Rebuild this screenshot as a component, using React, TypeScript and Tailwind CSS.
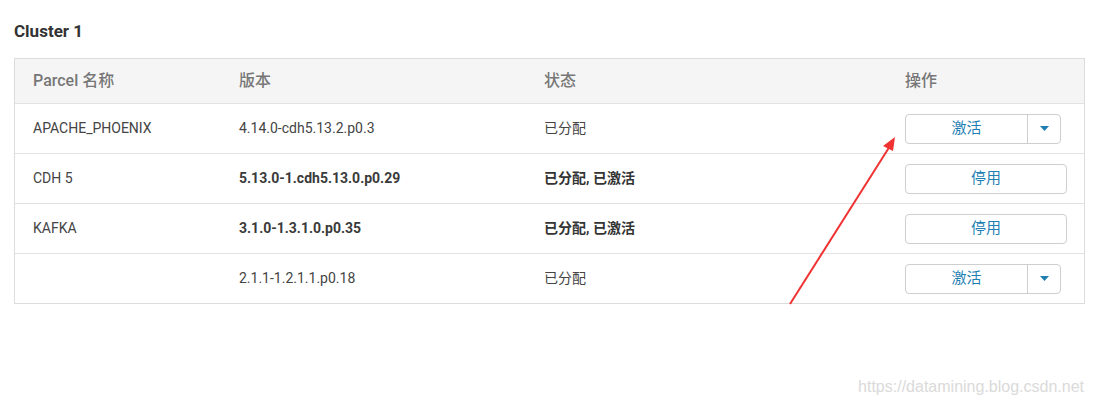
import React from 'react';

interface Row {
  name: string;
  version: string;
  status: string;
  active: boolean;
  action: string;
  split: boolean;
}

const rows: Row[] = [
  { name: 'APACHE_PHOENIX', version: '4.14.0-cdh5.13.2.p0.3', status: '已分配', active: false, action: '激活', split: true },
  { name: 'CDH 5', version: '5.13.0-1.cdh5.13.0.p0.29', status: '已分配, 已激活', active: true, action: '停用', split: false },
  { name: 'KAFKA', version: '3.1.0-1.3.1.0.p0.35', status: '已分配, 已激活', active: true, action: '停用', split: false },
  { name: '', version: '2.1.1-1.2.1.1.p0.18', status: '已分配', active: false, action: '激活', split: true },
];

const font = { fontFamily: 'Roboto, "Noto Sans CJK SC", sans-serif' };

const ActionButton: React.FC<{ row: Row }> = ({ row }) => {
  if (!row.split) {
    return (
      <button className="w-[162px] h-[30px] rounded-[4px] border border-[#cfcfcf] bg-white text-[15px] text-[#1f7fb3]">
        {row.action}
      </button>
    );
  }
  return (
    <div className="flex w-[156px] h-[30px] rounded-[4px] border border-[#cfcfcf] bg-white">
      <button className="flex-1 text-[15px] text-[#1f7fb3] border-r border-[#cfcfcf]">{row.action}</button>
      <button className="w-[32px] flex items-center justify-center">
        <svg width="9" height="5" viewBox="0 0 9 5">
          <path d="M0 0 L9 0 L4.5 5 Z" fill="#1f7fb3" />
        </svg>
      </button>
    </div>
  );
};

const App: React.FC = () => {
  return (
    <div className="relative w-[1094px] h-[409px] bg-white" style={font}>
      <div className="pt-[20px] pl-[14px] h-[58px]">
        <h2 className="text-[17px] font-bold text-[#333] leading-[22px]">Cluster 1</h2>
      </div>
      <div className="ml-[14px] w-[1071px] border border-[#dcdcdc]">
        <div className="grid grid-cols-[205px_305px_361px_1fr] h-[44px] bg-[#f5f5f5] items-center text-[16px] font-medium text-[#777]">
          <div className="pl-[18px]">Parcel 名称</div>
          <div className="pl-[19px]">版本</div>
          <div className="pl-[19px]">状态</div>
          <div className="pl-[19px]">操作</div>
        </div>
        {rows.map((row, i) => (
          <div
            key={i}
            className="grid grid-cols-[205px_305px_361px_1fr] h-[50px] items-center border-t border-[#e2e2e2] text-[14px] text-[#444]"
          >
            <div className="pl-[18px]">{row.name}</div>
            <div className={`pl-[19px] ${row.active ? 'font-bold text-[#3a3a3a]' : ''}`}>{row.version}</div>
            <div className={`pl-[19px] ${row.active ? 'font-bold text-[#333]' : ''}`}>{row.status}</div>
            <div className="pl-[19px]">
              <ActionButton row={row} />
            </div>
          </div>
        ))}
      </div>

      {/* red annotation arrow */}
      <svg className="absolute left-0 top-0 pointer-events-none" width="1094" height="409">
        <line x1="790" y1="304" x2="890" y2="146" stroke="#f03232" strokeWidth="2" />
        <path d="M895 137 L883 146 L893 151 Z" fill="#f03232" />
      </svg>

      <div className="absolute right-[10px] bottom-[10px] text-[16px] text-[#dadada]" style={{ fontFamily: '"Liberation Sans", Arial, sans-serif' }}>
        https://datamining.blog.csdn.net
      </div>
    </div>
  );
};

export default App;
